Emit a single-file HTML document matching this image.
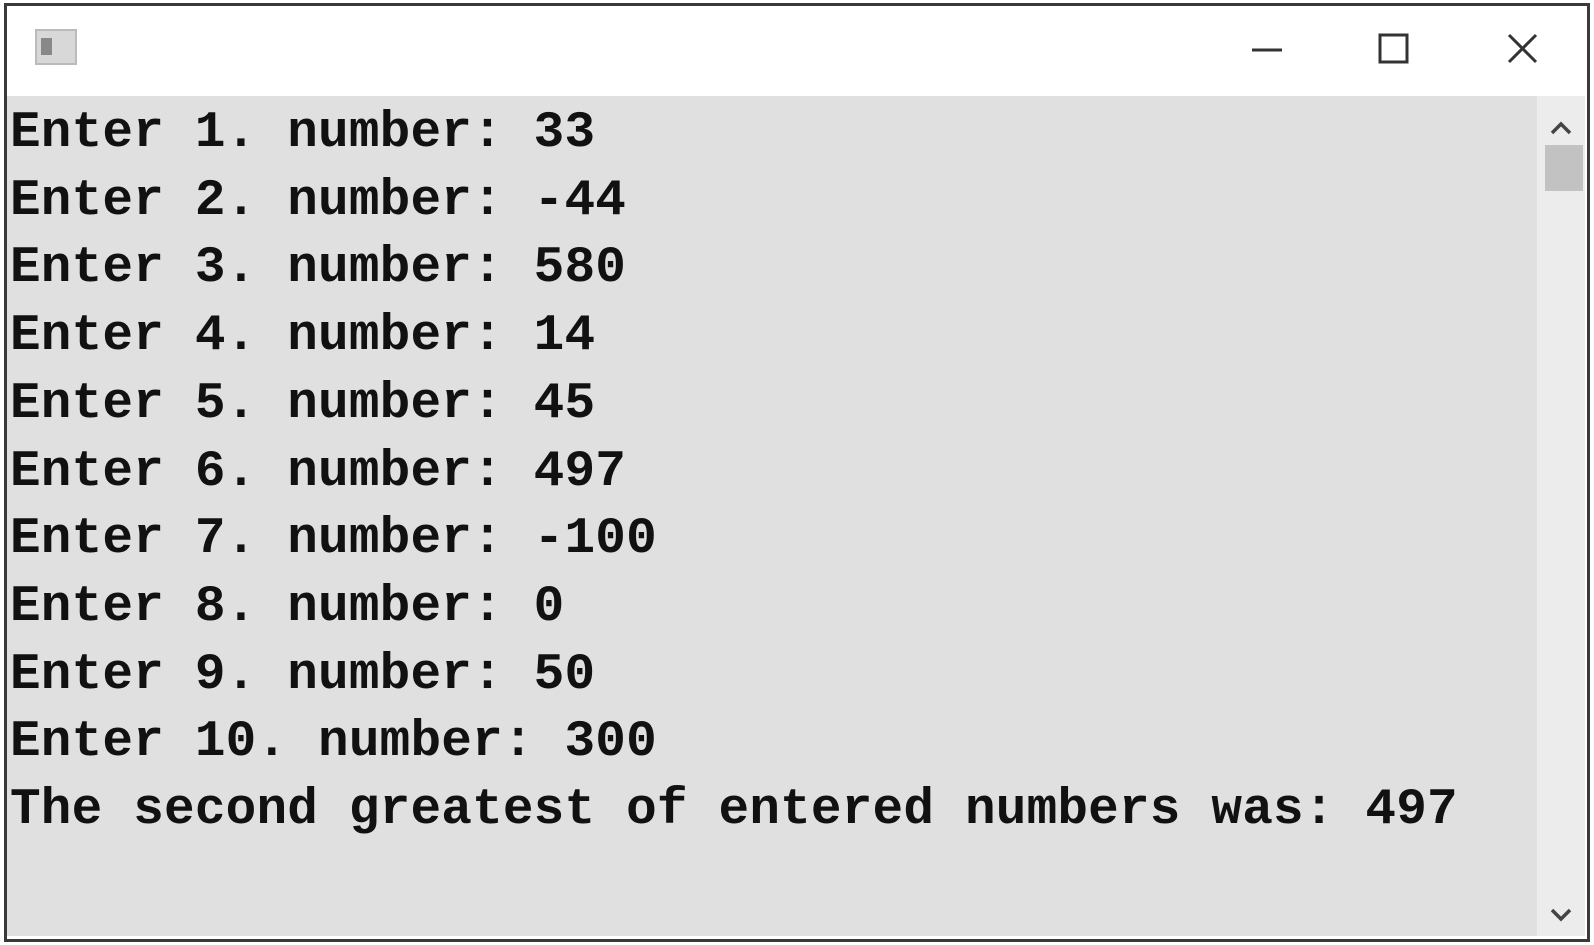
<!DOCTYPE html>
<html><head><style>
html,body{margin:0;padding:0;background:#fff;}
body{width:1594px;height:945px;position:relative;overflow:hidden;}
.win{position:absolute;left:4px;top:3px;width:1580px;height:933px;border:3px solid #3a3a3a;background:#fff;box-sizing:content-box;}
.con{position:absolute;left:7px;top:96px;width:1530px;height:840px;background:#e0e0e0;}
.sb{position:absolute;left:1537px;top:96px;width:48px;height:840px;background:#ececec;}
.thumb{position:absolute;left:1545px;top:145px;width:38px;height:46px;background:#c2c2c2;}
pre{position:absolute;left:10px;top:100px;margin:0;font-family:"Liberation Mono",monospace;font-weight:bold;font-size:51px;letter-spacing:0.2px;line-height:67.7px;color:#111;}
</style></head><body>
<div class="win"></div>
<div class="con"></div>
<div class="sb"></div>
<div class="thumb"></div>
<svg style="position:absolute;left:0;top:0" width="1594" height="945">
<rect x="36" y="30" width="40" height="34" fill="#d8d8d8" stroke="#bbb" stroke-width="2"/>
<rect x="41" y="38" width="11" height="17" fill="#888"/>
<line x1="1252" y1="50" x2="1282" y2="50" stroke="#333" stroke-width="3"/>
<rect x="1380" y="35" width="27" height="27" fill="none" stroke="#333" stroke-width="3"/>
<path d="M1509 35 L1536 62 M1536 35 L1509 62" stroke="#333" stroke-width="3"/>
<path d="M1552 133 L1561 124 L1570 133" fill="none" stroke="#444" stroke-width="3.5"/>
<path d="M1552 910 L1561 919 L1570 910" fill="none" stroke="#444" stroke-width="3.5"/>
</svg>
<pre>Enter 1. number: 33
Enter 2. number: -44
Enter 3. number: 580
Enter 4. number: 14
Enter 5. number: 45
Enter 6. number: 497
Enter 7. number: -100
Enter 8. number: 0
Enter 9. number: 50
Enter 10. number: 300
The second greatest of entered numbers was: 497</pre>
</body></html>
